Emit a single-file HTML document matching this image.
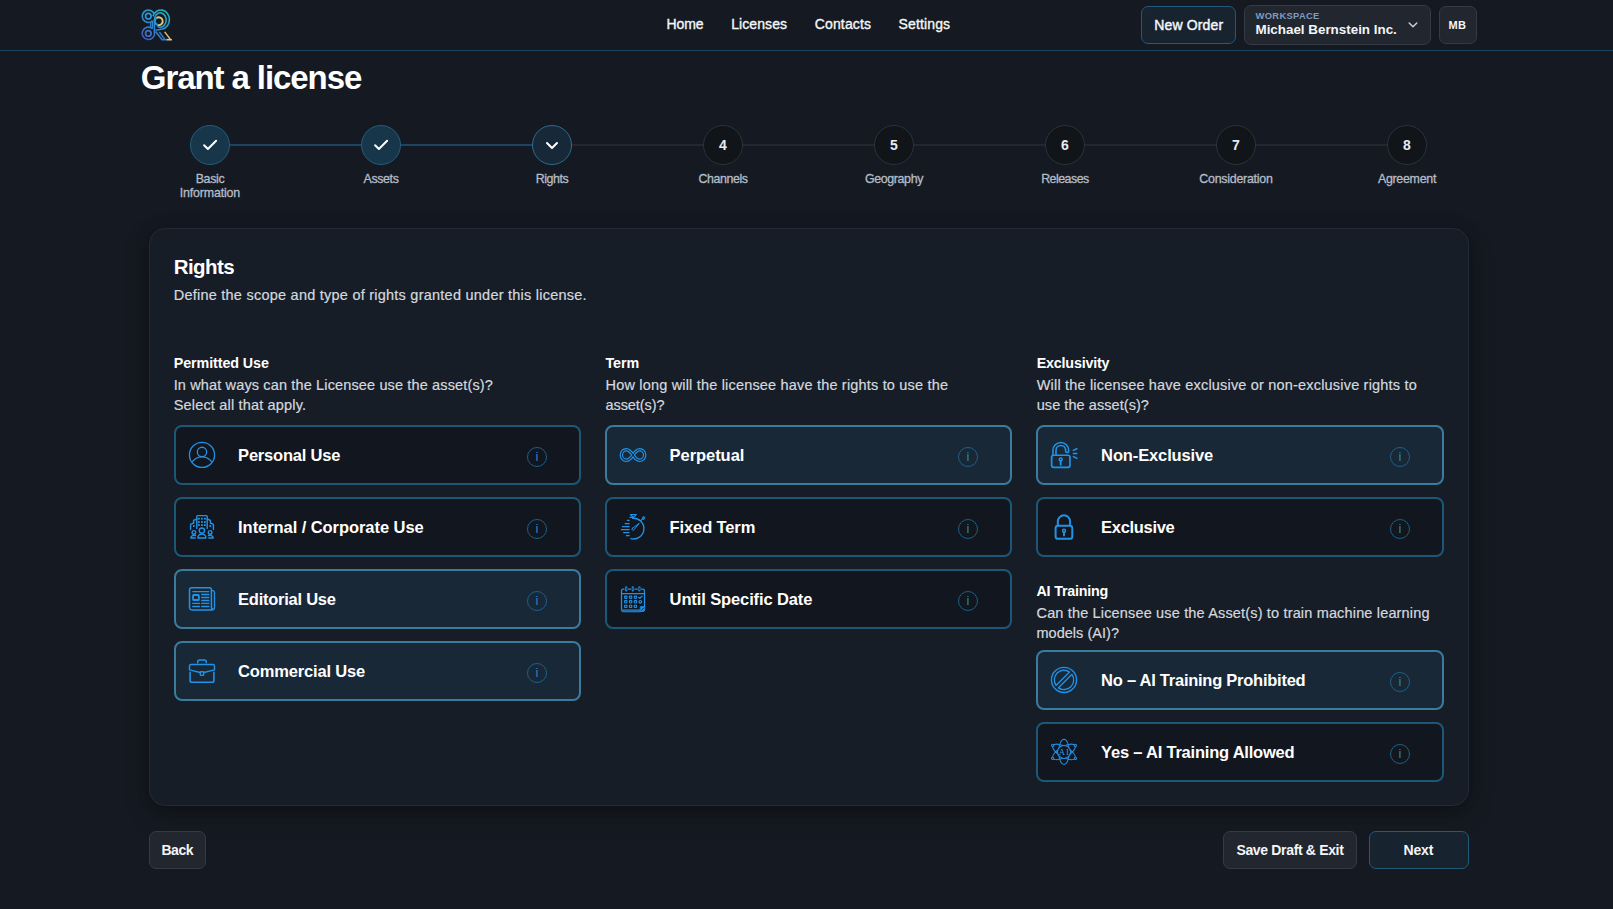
<!DOCTYPE html>
<html lang="en">
<head>
<meta charset="utf-8">
<title>Grant a license</title>
<style>
*{box-sizing:border-box;margin:0;padding:0}
html,body{width:1613px;height:909px;overflow:hidden;background:#151a22}
body{position:relative;font-family:"Liberation Sans",sans-serif;color:#fff}
a{color:inherit;text-decoration:none}
ol{list-style:none}
button{font:inherit;color:inherit;cursor:pointer;text-align:left;padding:0;margin:0;-webkit-appearance:none;appearance:none}
.t{position:absolute;white-space:nowrap;display:block}
.abs{position:absolute}
.logo{display:block;width:42px;height:42px}
.logo svg{display:block}
.hdr{left:0;top:0;width:1613px;height:51px;border-bottom:1px solid #1b4560;background:#151a22}
.btn{position:absolute;display:block;overflow:visible;border-radius:7px;border:1px solid #353a44;background:#22262e}
.btn.pri{border-color:#235a7a;background:#17232f}
.card{left:149px;top:228px;width:1320px;height:578px;border-radius:16px;border:1px solid #222a35;background:#171d27;box-shadow:0 8px 24px rgba(0,0,0,.28),0 0 14px rgba(0,0,0,.18)}
.opt{position:absolute;height:60px;border-radius:8px;border:2px solid #1c5778;background:#12161e}
.opt.sel{border-color:#3b7b9d;background:#182837}
.info{position:absolute;display:block;width:20px;height:20px;border-radius:50%;border:1px solid #1e5f86;background:transparent;left:351px;top:20px;color:#2b80ba;font-size:13px;line-height:18px;text-align:center}
.ic{position:absolute;left:12px;top:14px;width:28px;height:28px}
.ic svg{display:block;overflow:visible}
.st{position:absolute;width:40px;height:40px;border-radius:50%;top:125px;border:1px solid #2d3139;background:#11151a;text-align:center;font-size:14px;font-weight:700;line-height:38px;color:#e8ebf0}
.st.done{background:#17364a;border-color:#245c7b}
.st.cur{background:#172838;border-color:#2b6d90}
.st svg{display:block}
.ln{position:absolute;height:2px;top:144px;background:#232830}
.ln.on{background:#1b4560}
</style>
</head>
<body>
<header>
<div class="abs hdr"></div>
<a class="abs logo" style="left:136px;top:4px" aria-label="Home"><svg width="42" height="42" viewBox="0 0 42 42" fill="none" stroke="url(#lg)" stroke-width="1.6" stroke-linecap="butt">
<defs><linearGradient id="lg" gradientUnits="userSpaceOnUse" x1="34" y1="6" x2="8" y2="38"><stop offset="0" stop-color="#1fb8b4"/><stop offset=".5" stop-color="#2a8fd6"/><stop offset="1" stop-color="#4a52b8"/></linearGradient></defs>
<path d="M16.4 17 A6.2 6.2 0 1 1 18.2 10"/><circle cx="12.3" cy="12.2" r="2.75" stroke-width="1.8"/>
<path d="M16.4 24.6 A6.2 6.2 0 1 0 18.4 27.8"/><circle cx="12.3" cy="29.4" r="2.75" stroke-width="1.8"/>
<path d="M16.3 16.6 V24.8"/><path d="M14.4 18.4 V23.4" stroke-width="1"/>
<path d="M16.91 12.32 A8.5 9.6 0 1 1 26.38 25.05 L19.4 26.2"/>
<path d="M18.42 16.63 A5.9 7.2 0 1 1 21.35 22.24"/>
<path d="M18.4 15.2 V28"/>
<path d="M22.12 21.04 A3.9 3.9 0 0 1 20.56 14.01" stroke-width="1.9"/>
<path d="M20.56 14.01 A3.9 3.9 0 1 1 22.12 21.04" stroke="#e4c878" stroke-width="1.9"/>
<path d="M19.6 27.6 L26.3 36.1"/><path d="M23.4 28 L29 35.6" stroke-width="1.3"/>
<path d="M26 35.7 H31" stroke-width="1.6"/>
<path d="M28.7 27.9 L34.6 35.6" stroke="#e4c878" stroke-width="1.4"/><path d="M30.8 35.7 H35.9" stroke="#e4c878" stroke-width="1.6"/>
</svg></a>
<nav>
<a class="t" style="left:666.5px;top:17.4px;font-size:14px;line-height:14px;font-weight:400;color:#f4f6f9;letter-spacing:-0.090px;-webkit-text-stroke:.35px;">Home</a>
<a class="t" style="left:731.2px;top:17.4px;font-size:14px;line-height:14px;font-weight:400;color:#f4f6f9;letter-spacing:0.092px;-webkit-text-stroke:.35px;">Licenses</a>
<a class="t" style="left:814.8px;top:17.4px;font-size:14px;line-height:14px;font-weight:400;color:#f4f6f9;letter-spacing:0.131px;-webkit-text-stroke:.35px;">Contacts</a>
<a class="t" style="left:898.6px;top:17.4px;font-size:14px;line-height:14px;font-weight:400;color:#f4f6f9;letter-spacing:0.126px;-webkit-text-stroke:.35px;">Settings</a>
</nav>
<button type="button" class="btn pri" style="left:1141px;top:6px;width:95px;height:38px"><span class="t" style="left:12.3px;top:10.7px;font-size:14px;line-height:14px;font-weight:400;color:#f4f6f9;letter-spacing:0.146px;-webkit-text-stroke:.45px;">New Order</span></button>
<button type="button" class="btn" style="left:1244px;top:5px;width:187px;height:40px"><span class="t" style="left:10.5px;top:4.8px;font-size:9.4px;line-height:9.4px;font-weight:700;color:#7d9cc0;letter-spacing:0.323px;">WORKSPACE</span><span class="t" style="left:10.5px;top:17.4px;font-size:13.4px;line-height:13.4px;font-weight:700;color:#f4f6f9;letter-spacing:-0.004px;">Michael Bernstein Inc.</span><svg class="abs" style="left:162px;top:14px" width="12" height="10" viewBox="0 0 12 10" fill="none" stroke="#c9ced6" stroke-width="1.5" stroke-linecap="round" stroke-linejoin="round"><path d="M2.2 3 L6 6.8 L9.8 3"/></svg></button>
<button type="button" class="btn" style="left:1439px;top:6px;width:38px;height:38px"><span class="t" style="left:8.4px;top:12.7px;font-size:11px;line-height:11px;font-weight:700;color:#f4f6f9;letter-spacing:0.495px;">MB</span></button>
</header>
<main>
<h1 class="t" style="left:140.8px;top:60.5px;font-size:33px;line-height:33px;font-weight:700;color:#ffffff;letter-spacing:-1.081px;">Grant a license</h1>
<ol class="steps">
<li><div class="ln on" style="left:230px;width:131px"></div><div class="st done" style="left:190px"><svg width="38" height="38" viewBox="0 0 38 38" fill="none" stroke="#fff" stroke-width="2" stroke-linecap="round" stroke-linejoin="round"><path d="M13.1 19.3 L16.9 23 L25.1 14.8"/></svg></div><span class="t" style="left:195.7px;top:172.5px;font-size:12.4px;line-height:12.4px;font-weight:400;color:#b4bcc8;letter-spacing:-0.342px;-webkit-text-stroke:.3px;">Basic</span><span class="t" style="left:179.8px;top:186.5px;font-size:12.4px;line-height:12.4px;font-weight:400;color:#b4bcc8;letter-spacing:-0.153px;-webkit-text-stroke:.3px;">Information</span></li>
<li><div class="ln on" style="left:401px;width:131px"></div><div class="st done" style="left:361px"><svg width="38" height="38" viewBox="0 0 38 38" fill="none" stroke="#fff" stroke-width="2" stroke-linecap="round" stroke-linejoin="round"><path d="M13.1 19.3 L16.9 23 L25.1 14.8"/></svg></div><span class="t" style="left:363.5px;top:172.5px;font-size:12.4px;line-height:12.4px;font-weight:400;color:#b4bcc8;letter-spacing:-0.365px;-webkit-text-stroke:.3px;">Assets</span></li>
<li><div class="ln" style="left:572px;width:131px"></div><div class="st cur" style="left:532px"><svg width="38" height="38" viewBox="0 0 38 38" fill="none" stroke="#fff" stroke-width="2" stroke-linecap="round" stroke-linejoin="round"><path d="M14 17 L19 22 L24 17"/></svg></div><span class="t" style="left:535.7px;top:172.5px;font-size:12.4px;line-height:12.4px;font-weight:400;color:#b4bcc8;letter-spacing:-0.421px;-webkit-text-stroke:.3px;">Rights</span></li>
<li><div class="ln" style="left:743px;width:131px"></div><div class="st" style="left:703px">4</div><span class="t" style="left:698.5px;top:172.5px;font-size:12.4px;line-height:12.4px;font-weight:400;color:#b4bcc8;letter-spacing:-0.420px;-webkit-text-stroke:.3px;">Channels</span></li>
<li><div class="ln" style="left:914px;width:131px"></div><div class="st" style="left:874px">5</div><span class="t" style="left:865.0px;top:172.5px;font-size:12.4px;line-height:12.4px;font-weight:400;color:#b4bcc8;letter-spacing:-0.368px;-webkit-text-stroke:.3px;">Geography</span></li>
<li><div class="ln" style="left:1085px;width:131px"></div><div class="st" style="left:1045px">6</div><span class="t" style="left:1041.2px;top:172.5px;font-size:12.4px;line-height:12.4px;font-weight:400;color:#b4bcc8;letter-spacing:-0.520px;-webkit-text-stroke:.3px;">Releases</span></li>
<li><div class="ln" style="left:1256px;width:131px"></div><div class="st" style="left:1216px">7</div><span class="t" style="left:1199.3px;top:172.5px;font-size:12.4px;line-height:12.4px;font-weight:400;color:#b4bcc8;letter-spacing:-0.244px;-webkit-text-stroke:.3px;">Consideration</span></li>
<li><div class="st" style="left:1387px">8</div><span class="t" style="left:1377.9px;top:172.5px;font-size:12.4px;line-height:12.4px;font-weight:400;color:#b4bcc8;letter-spacing:-0.269px;-webkit-text-stroke:.3px;">Agreement</span></li>
</ol>
<section class="abs card">
<h2 class="t" style="left:23.7px;top:27.8px;font-size:20.5px;line-height:20.5px;font-weight:700;color:#ffffff;letter-spacing:-0.580px;">Rights</h2>
<p class="t" style="left:23.7px;top:59.0px;font-size:14.5px;line-height:14.5px;font-weight:400;color:#d3d8df;letter-spacing:0.238px;-webkit-text-stroke:.2px;">Define the scope and type of rights granted under this license.</p>
<section><h3 class="t" style="left:23.7px;top:126.8px;font-size:14.3px;line-height:14.3px;font-weight:700;color:#ffffff;letter-spacing:-0.074px;">Permitted Use</h3><p class="t" style="left:23.7px;top:148.7px;font-size:14.5px;line-height:14.5px;font-weight:400;color:#d3d8df;letter-spacing:0.140px;-webkit-text-stroke:.2px;">In what ways can the Licensee use the asset(s)?</p><p class="t" style="left:23.7px;top:168.7px;font-size:14.5px;line-height:14.5px;font-weight:400;color:#d3d8df;letter-spacing:0.177px;-webkit-text-stroke:.2px;">Select all that apply.</p><div class="opt" role="checkbox" aria-checked="false" style="left:24px;top:196px;width:407px"><div class="ic"><svg width="28" height="28" viewBox="0 0 28 28" fill="none" stroke="#2292e6" stroke-width="1.3" stroke-linecap="round" stroke-linejoin="round" ><circle cx="14" cy="13.9" r="12.55"/><circle cx="14" cy="10.9" r="4.65"/><path d="M4.56 20.4 A12.2 12.2 0 0 1 23.44 20.4"/></svg></div><span class="t" style="left:62.1px;top:20.0px;font-size:16.5px;line-height:16.5px;font-weight:700;color:#ffffff;letter-spacing:-0.205px;">Personal Use</span><button type="button" class="info" style="left:351px" aria-label="More info">i</button></div><div class="opt" role="checkbox" aria-checked="false" style="left:24px;top:268px;width:407px"><div class="ic"><svg width="28" height="28" viewBox="0 0 28 28" fill="none" stroke="#2292e6" stroke-width="1.4" stroke-linecap="round" stroke-linejoin="round" ><path d="M8.8 15.4 V3.4 Q8.8 2.6 9.6 2.6 H18.4 Q19.2 2.6 19.2 3.4 V15.4"/><path d="M8.8 6 L5.6 7.4 V10.2 M5.6 10 L2.6 11.4 V16.6"/><path d="M19.2 6 L22.4 7.4 V10.2 M22.4 10 L25.4 11.4 V16.6"/><rect x="10.0" y="4.8" width="1.8" height="1.8" fill="#2292e6" stroke="none"/><rect x="10.0" y="8.1" width="1.8" height="1.8" fill="#2292e6" stroke="none"/><rect x="10.0" y="11.2" width="1.8" height="1.8" fill="#2292e6" stroke="none"/><rect x="13.0" y="4.8" width="1.8" height="1.8" fill="#2292e6" stroke="none"/><rect x="13.0" y="8.1" width="1.8" height="1.8" fill="#2292e6" stroke="none"/><rect x="13.0" y="11.2" width="1.8" height="1.8" fill="#2292e6" stroke="none"/><rect x="15.999999999999998" y="4.8" width="1.8" height="1.8" fill="#2292e6" stroke="none"/><rect x="15.999999999999998" y="8.1" width="1.8" height="1.8" fill="#2292e6" stroke="none"/><rect x="15.999999999999998" y="11.2" width="1.8" height="1.8" fill="#2292e6" stroke="none"/><rect x="5.0" y="12" width="1.6" height="2" fill="#2292e6" stroke="none"/><rect x="21.4" y="12" width="1.6" height="2" fill="#2292e6" stroke="none"/><circle cx="13.9" cy="17.6" r="2.6"/><path d="M9.9 25 V24.6 A4 3.6 0 0 1 17.9 24.6 V25 Z"/><circle cx="5.9" cy="19.4" r="1.8"/><path d="M2.8 25 A3.2 2.9 0 0 1 7.6 22.6 M2.8 25 H7.2"/><circle cx="22.1" cy="19.4" r="1.8"/><path d="M25.2 25 A3.2 2.9 0 0 0 20.4 22.6 M25.2 25 H20.8"/></svg></div><span class="t" style="left:62.1px;top:20.0px;font-size:16.5px;line-height:16.5px;font-weight:700;color:#ffffff;letter-spacing:-0.064px;">Internal / Corporate Use</span><button type="button" class="info" style="left:351px" aria-label="More info">i</button></div><div class="opt sel" role="checkbox" aria-checked="true" style="left:24px;top:340px;width:407px"><div class="ic"><svg width="28" height="28" viewBox="0 0 28 28" fill="none" stroke="#2292e6" stroke-width="1.3" stroke-linecap="round" stroke-linejoin="round" ><path d="M23.4 24.9 H4 Q1.55 24.9 1.55 22.6 V4.6 Q1.55 2.7 3.4 2.7 H21.6 Q23.4 2.7 23.4 4.6 V22.6 Q23.4 23.6 24.4 23.4" stroke-width="1.5"/><path d="M23.6 5.7 H24.6 Q26.5 5.7 26.5 7.6 V22.4 Q26.5 24.9 23.4 24.9" stroke-width="1.3"/><path d="M4.8 6.55 H20.8"/><rect x="5.05" y="10" width="5.8" height="5" rx=".6" stroke-width="1.8"/><path d="M13.7 9.5 H20.8 M13.7 12.5 H20.8 M13.7 15.5 H20.8 M4.7 18.45 H11.5 M13.7 18.45 H20.8 M4.7 21.5 H11.5 M13.7 21.5 H20.8"/></svg></div><span class="t" style="left:62.1px;top:20.0px;font-size:16.5px;line-height:16.5px;font-weight:700;color:#ffffff;letter-spacing:-0.252px;">Editorial Use</span><button type="button" class="info" style="left:351px" aria-label="More info">i</button></div><div class="opt sel" role="checkbox" aria-checked="true" style="left:24px;top:412px;width:407px"><div class="ic"><svg width="28" height="28" viewBox="0 0 28 28" fill="none" stroke="#2292e6" stroke-width="1.4" stroke-linecap="round" stroke-linejoin="round" ><path d="M9.7 5.8 V4.9 Q9.7 2.9 11.7 2.9 H16.3 Q18.3 2.9 18.3 4.9 V5.8" stroke-width="1.5"/><path d="M12.1 15.5 L1.5 12.9 V9.1 Q1.5 7.45 3.2 7.45 H24.8 Q26.5 7.45 26.5 9.1 V12.9 L15.9 15.5" stroke-width="1.4"/><rect x="12.3" y="14.7" width="3.4" height="3.7" rx=".7" stroke-width="1.4"/><path d="M2.1 15.3 V23.4 Q2.1 25.2 3.9 25.2 H24.1 Q25.9 25.2 25.9 23.4 V15.3" stroke-width="1.6"/></svg></div><span class="t" style="left:62.1px;top:20.0px;font-size:16.5px;line-height:16.5px;font-weight:700;color:#ffffff;letter-spacing:-0.165px;">Commercial Use</span><button type="button" class="info" style="left:351px" aria-label="More info">i</button></div></section>
<section><h3 class="t" style="left:455.5px;top:126.8px;font-size:14.3px;line-height:14.3px;font-weight:700;color:#ffffff;letter-spacing:-0.052px;">Term</h3><p class="t" style="left:455.5px;top:148.7px;font-size:14.5px;line-height:14.5px;font-weight:400;color:#d3d8df;letter-spacing:0.185px;-webkit-text-stroke:.2px;">How long will the licensee have the rights to use the</p><p class="t" style="left:455.5px;top:168.7px;font-size:14.5px;line-height:14.5px;font-weight:400;color:#d3d8df;letter-spacing:-0.071px;-webkit-text-stroke:.2px;">asset(s)?</p><div class="opt sel" role="radio" aria-checked="true" style="left:455px;top:196px;width:407px"><div class="ic"><svg width="28" height="28" viewBox="0 0 28 28" fill="none" stroke="#2292e6" stroke-width="1.3" stroke-linecap="round" stroke-linejoin="round" ><path d="M14 14 C11.8 10.6 9.8 8.7 7.2 8.7 A4.85 5.3 0 0 0 7.2 19.3 C9.8 19.3 11.8 17.4 14 14 C16.2 10.6 18.2 8.7 20.8 8.7 A4.85 5.3 0 0 1 20.8 19.3 C18.2 19.3 16.2 17.4 14 14 Z" stroke-width="3.5"/><path d="M14 14 C11.8 10.6 9.8 8.7 7.2 8.7 A4.85 5.3 0 0 0 7.2 19.3 C9.8 19.3 11.8 17.4 14 14 C16.2 10.6 18.2 8.7 20.8 8.7 A4.85 5.3 0 0 1 20.8 19.3 C18.2 19.3 16.2 17.4 14 14 Z" stroke="#182837" stroke-width="1.15"/></svg></div><span class="t" style="left:62.6px;top:20.0px;font-size:16.5px;line-height:16.5px;font-weight:700;color:#ffffff;letter-spacing:-0.056px;">Perpetual</span><button type="button" class="info" style="left:351px" aria-label="More info">i</button></div><div class="opt" role="radio" aria-checked="false" style="left:455px;top:268px;width:407px"><div class="ic"><svg width="28" height="28" viewBox="0 0 28 28" fill="none" stroke="#2292e6" stroke-width="1.3" stroke-linecap="round" stroke-linejoin="round" ><path d="M13.6 5.25 A10.4 10.4 0 1 1 11.8 25.65" stroke-width="1.35"/><path d="M11.3 1.5 H17.3 L14.4 4.3 Z M11 4.4 H13.6" stroke-width="1.1"/><path d="M23.4 5 L24.6 3.6 L25.8 5 L24.6 6.4 Z M21.8 7.6 L23.2 6.2" stroke-width="1.1"/><path d="M13.3 15.4 L20.2 10.3 L14.6 17.2 Q13.4 17.6 13 16.6 Q12.8 15.9 13.3 15.4 Z" stroke-width="1" /><path d="M7.9 7.4 H10.6 M5.7 10.5 H10.6 M3 13.5 H10.6 M1.9 16.5 H10.6 M4.2 19.5 H10.6 M7 22.6 H10.6" stroke-width="1.25" stroke-linecap="butt"/></svg></div><span class="t" style="left:62.6px;top:20.0px;font-size:16.5px;line-height:16.5px;font-weight:700;color:#ffffff;letter-spacing:-0.121px;">Fixed Term</span><button type="button" class="info" style="left:351px" aria-label="More info">i</button></div><div class="opt" role="radio" aria-checked="false" style="left:455px;top:340px;width:407px"><div class="ic"><svg width="28" height="28" viewBox="0 0 28 28" fill="none" stroke="#2292e6" stroke-width="1.3" stroke-linecap="round" stroke-linejoin="round" ><path d="M5 4.2 H4.2 Q2.5 4.2 2.5 5.9 V24.6 Q2.5 26.5 4.4 26.5 H21.4 M25.5 21.6 V5.9 Q25.5 4.2 23.8 4.2 H22.6 M9.4 4.2 H11.6 M16 4.2 H18.2"/><path d="M2.5 8.6 H25.5"/><path d="M2.8 24.7 H21.2 V26.3 H4 Q2.8 26.3 2.8 25 Z" fill="#1d6fb4" stroke="#1d6fb4" stroke-width=".8"/><path d="M21.6 21.6 H25.7 V25 Q25.7 26.4 24.3 26.4 H21.6 Z" fill="#2292e6" stroke-width=".8"/><path d="M22.8 25.2 L24.6 23" stroke="#12161e" stroke-width=".9"/><path d="M7.2 2.2 V5.4" stroke-width="2.1"/><path d="M7.3 2.9 V4.7" stroke="#12161e" stroke-width=".7"/><path d="M13.8 2.2 V5.4" stroke-width="2.1"/><path d="M13.9 2.9 V4.7" stroke="#12161e" stroke-width=".7"/><path d="M20.4 2.2 V5.4" stroke-width="2.1"/><path d="M20.5 2.9 V4.7" stroke="#12161e" stroke-width=".7"/><rect x="5.56" y="11.11" width="2.4" height="2.3" rx=".6" stroke-width="1.1"/><rect x="5.56" y="15.65" width="2.4" height="2.3" rx=".6" stroke-width="1.1"/><rect x="5.56" y="20.25" width="2.4" height="2.3" rx=".6" stroke-width="1.1"/><rect x="10.40" y="11.11" width="2.4" height="2.3" rx=".6" stroke-width="1.1"/><rect x="10.40" y="15.65" width="2.4" height="2.3" rx=".6" stroke-width="1.1"/><rect x="10.40" y="20.25" width="2.4" height="2.3" rx=".6" stroke-width="1.1"/><rect x="15.20" y="11.11" width="2.4" height="2.3" rx=".6" stroke-width="1.1"/><rect x="15.20" y="15.65" width="2.4" height="2.3" rx=".6" stroke-width="1.1"/><rect x="15.20" y="20.25" width="2.4" height="2.3" rx=".6" stroke-width="1.1"/><path d="M19.6 12.3 L20.8 13.3 L23 11.2" stroke-width="1.2"/><circle cx="21.3" cy="16.8" r="1.3" stroke-width="1.2"/></svg></div><span class="t" style="left:62.6px;top:20.0px;font-size:16.5px;line-height:16.5px;font-weight:700;color:#ffffff;letter-spacing:-0.114px;">Until Specific Date</span><button type="button" class="info" style="left:351px" aria-label="More info">i</button></div></section>
<section><h3 class="t" style="left:886.7px;top:126.8px;font-size:14.3px;line-height:14.3px;font-weight:700;color:#ffffff;letter-spacing:-0.182px;">Exclusivity</h3><p class="t" style="left:886.7px;top:148.7px;font-size:14.5px;line-height:14.5px;font-weight:400;color:#d3d8df;letter-spacing:0.188px;-webkit-text-stroke:.2px;">Will the licensee have exclusive or non-exclusive rights to</p><p class="t" style="left:886.7px;top:168.7px;font-size:14.5px;line-height:14.5px;font-weight:400;color:#d3d8df;letter-spacing:0.063px;-webkit-text-stroke:.2px;">use the asset(s)?</p><div class="opt sel" role="radio" aria-checked="true" style="left:886px;top:196px;width:408px"><div class="ic"><svg width="28" height="28" viewBox="0 0 28 28" fill="none" stroke="#2292e6" stroke-width="1.6" stroke-linecap="round" stroke-linejoin="round" ><rect x="1.65" y="14.25" width="18.3" height="12.1" rx="2" stroke-width="1.7"/><path d="M2.95 14 V9.3 A7.85 7.85 0 0 1 18.65 9.3 V10.3 Q18.65 11.5 17.2 11.5 Q15.6 11.5 15.6 10.3 V9.3 A4.8 4.8 0 0 0 6 9.3 V14" stroke-width="1.6"/><circle cx="10.7" cy="18.4" r="1.45" stroke-width="1.5"/><path d="M10.7 20.2 V23.7" stroke-width="1.9"/><path d="M23.4 9.4 L26.8 7.7 M23.4 12.5 H26.8 M23.4 15.6 L26.8 17.3" stroke-width="1.6"/></svg></div><span class="t" style="left:63.1px;top:20.0px;font-size:16.5px;line-height:16.5px;font-weight:700;color:#ffffff;letter-spacing:-0.125px;">Non-Exclusive</span><button type="button" class="info" style="left:352px" aria-label="More info">i</button></div><div class="opt" role="radio" aria-checked="false" style="left:886px;top:268px;width:408px"><div class="ic"><svg width="28" height="28" viewBox="0 0 28 28" fill="none" stroke="#2292e6" stroke-width="2" stroke-linecap="round" stroke-linejoin="round" ><rect x="5.6" y="12.8" width="16.7" height="13" rx="2.4" stroke-width="2"/><path d="M7.8 12.6 V8.45 A6.15 6.15 0 0 1 20.1 8.45 V12.6" stroke-width="2"/><circle cx="14" cy="17.8" r="1.45" stroke-width="1.5"/><path d="M14 19.6 V22.4" stroke-width="1.9"/></svg></div><span class="t" style="left:63.1px;top:20.0px;font-size:16.5px;line-height:16.5px;font-weight:700;color:#ffffff;letter-spacing:-0.316px;">Exclusive</span><button type="button" class="info" style="left:352px" aria-label="More info">i</button></div></section>
<section><h3 class="t" style="left:886.5px;top:354.7px;font-size:14.3px;line-height:14.3px;font-weight:700;color:#ffffff;letter-spacing:-0.207px;">AI Training</h3><p class="t" style="left:886.5px;top:376.5px;font-size:14.5px;line-height:14.5px;font-weight:400;color:#d3d8df;letter-spacing:0.161px;-webkit-text-stroke:.2px;">Can the Licensee use the Asset(s) to train machine learning</p><p class="t" style="left:886.5px;top:396.5px;font-size:14.5px;line-height:14.5px;font-weight:400;color:#d3d8df;letter-spacing:0.025px;-webkit-text-stroke:.2px;">models (AI)?</p><div class="opt sel" role="radio" aria-checked="true" style="left:886px;top:421px;width:408px"><div class="ic"><svg width="28" height="28" viewBox="0 0 28 28" fill="none" stroke="#2292e6" stroke-width="1.35" stroke-linecap="round" stroke-linejoin="round" ><circle cx="14" cy="13.9" r="12.55"/><path d="M6.05 19.45 A9.7 9.7 0 0 1 19.55 5.95 Z"/><path d="M21.95 8.35 A9.7 9.7 0 0 1 8.45 21.85 Z"/></svg></div><span class="t" style="left:63.1px;top:20.0px;font-size:16.5px;line-height:16.5px;font-weight:700;color:#ffffff;letter-spacing:-0.254px;">No – AI Training Prohibited</span><button type="button" class="info" style="left:352px" aria-label="More info">i</button></div><div class="opt" role="radio" aria-checked="false" style="left:886px;top:493px;width:408px"><div class="ic"><svg width="28" height="28" viewBox="0 0 28 28" fill="none" stroke="#2292e6" stroke-width="1.05" stroke-linecap="round" stroke-linejoin="round" ><ellipse cx="14" cy="13.9" rx="5.2" ry="12.7"/><ellipse cx="14" cy="13.9" rx="5.2" ry="12.7" transform="rotate(60 14 13.9)"/><ellipse cx="14" cy="13.9" rx="5.2" ry="12.7" transform="rotate(-60 14 13.9)"/><circle cx="14" cy="13.9" r="6.5" fill="#12161e"/><circle cx="2.6" cy="7.4" r="1.1" fill="#12161e"/><circle cx="25.4" cy="7.4" r="1.1" fill="#12161e"/><circle cx="2.6" cy="20.4" r="1.1" fill="#12161e"/><circle cx="25.4" cy="20.4" r="1.1" fill="#12161e"/><text x="14.3" y="16.8" text-anchor="middle" font-family="Liberation Serif, serif" font-size="8.6" font-weight="400" fill="#3aa0ee" stroke="none" letter-spacing=".9" style="opacity:.99">AI</text></svg></div><span class="t" style="left:63.1px;top:20.0px;font-size:16.5px;line-height:16.5px;font-weight:700;color:#ffffff;letter-spacing:-0.215px;">Yes – AI Training Allowed</span><button type="button" class="info" style="left:352px" aria-label="More info">i</button></div></section>
</section>
<footer>
<button type="button" class="btn" style="left:149px;top:831px;width:57px;height:38px"><span class="t" style="left:11.5px;top:11.2px;font-size:14px;line-height:14px;font-weight:700;color:#f4f6f9;letter-spacing:-0.492px;">Back</span></button>
<button type="button" class="btn" style="left:1223px;top:831px;width:134px;height:38px"><span class="t" style="left:12.4px;top:11.2px;font-size:14px;line-height:14px;font-weight:700;color:#f4f6f9;letter-spacing:-0.337px;">Save Draft &amp; Exit</span></button>
<button type="button" class="btn pri" style="left:1369px;top:831px;width:100px;height:38px"><span class="t" style="left:33.5px;top:11.2px;font-size:14px;line-height:14px;font-weight:700;color:#f4f6f9;letter-spacing:-0.140px;">Next</span></button>
</footer>
</main>
</body>
</html>
